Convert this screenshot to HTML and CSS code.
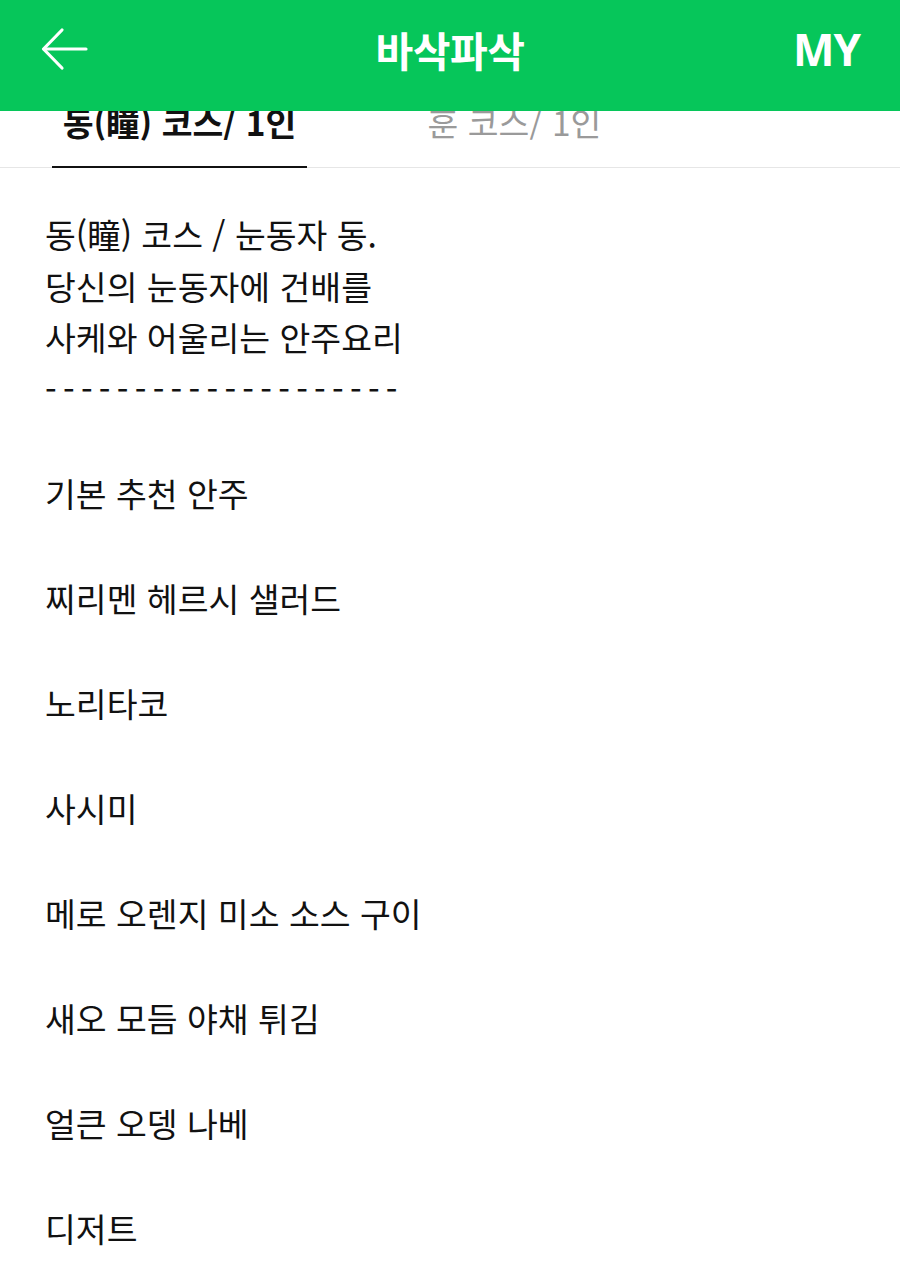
FILE: index.html
```html
<!DOCTYPE html>
<html lang="ko">
<head>
<meta charset="utf-8">
<title>바삭파삭</title>
<link rel="stylesheet" href="styles.css">
</head>
<body>
<header class="topbar">
  <span class="back" aria-label="뒤로">
    <svg width="50" height="46" viewBox="0 0 50 46" fill="none" stroke="#fff" stroke-width="3.2" stroke-linecap="round" stroke-linejoin="round">
      <path d="M46 23H4"/>
      <path d="M22 4L3.5 23L22 42"/>
    </svg>
  </span>
  <h1 class="title">바삭파삭</h1>
  <span class="my">MY</span>
</header>
<main class="page">
  <nav class="tabs">
    <div class="tab active">동(瞳) 코스/ 1인</div>
    <div class="tab">훈 코스/ 1인</div>
  </nav>
  <section class="content">
    <p class="desc">동(瞳) 코스 / 눈동자 동.<br>당신의 눈동자에 건배를<br>사케와 어울리는 안주요리<br><span class="rule">- - - - - - - - - - - - - - - - - - - -</span></p>
    <ul class="menu">
      <li>기본 추천 안주</li>
      <li>찌리멘 헤르시 샐러드</li>
      <li>노리타코</li>
      <li>사시미</li>
      <li>메로 오렌지 미소 소스 구이</li>
      <li>새오 모듬 야채 튀김</li>
      <li>얼큰 오뎅 나베</li>
      <li>디저트</li>
    </ul>
  </section>
</main>
</body>
</html>
```

FILE: styles.css
```css
* { box-sizing: border-box; }
html, body { margin: 0; padding: 0; }
body {
  background: #fff;
  color: #111;
  font-family: "Noto Sans CJK KR", "Noto Sans", sans-serif;
  width: 900px;
  overflow: hidden;
}
.topbar {
  position: fixed;
  top: 0; left: 0; right: 0;
  height: 111px;
  background: #06c65a;
  color: #fff;
  display: flex;
  align-items: center;
  justify-content: space-between;
  padding: 0 40px 14px 40px;
  z-index: 10;
}
.back { display: flex; width: 150px; }
.title {
  margin: 0;
  font-size: 41px;
  font-weight: 700;
  letter-spacing: -0.5px;
}
.my {
  width: 150px;
  text-align: right;
  font-size: 44px;
  font-weight: 700;
  font-family: "Noto Sans", "Noto Sans CJK KR", sans-serif;
  letter-spacing: -1px;
}
.page { padding-top: 94px; }
.tabs {
  display: flex;
  border-bottom: 1px solid #e6e6e6;
  padding-left: 52px;
  height: 74px;
}
.tab {
  font-size: 33.5px;
  color: #9a9a9a;
  line-height: 56px;
  padding: 0 8px;
  width: 255px;
  text-align: center;
  margin-right: 80px;
  white-space: nowrap;
}
.tab.active {
  color: #111;
  font-weight: 700;
  border-bottom: 2px solid #111;
  margin-bottom: -1px;
}
.content { padding: 40px 45px 0; }
.desc {
  margin: 0;
  font-size: 33.5px;
  line-height: 51.5px;
}
.rule { letter-spacing: -1.55px; }
.menu {
  list-style: none;
  margin: 53px 0 0;
  padding: 0;
  display: flex;
  flex-direction: column;
  gap: 53px;
}
.menu li {
  font-size: 33.5px;
  line-height: 52px;
}
```
